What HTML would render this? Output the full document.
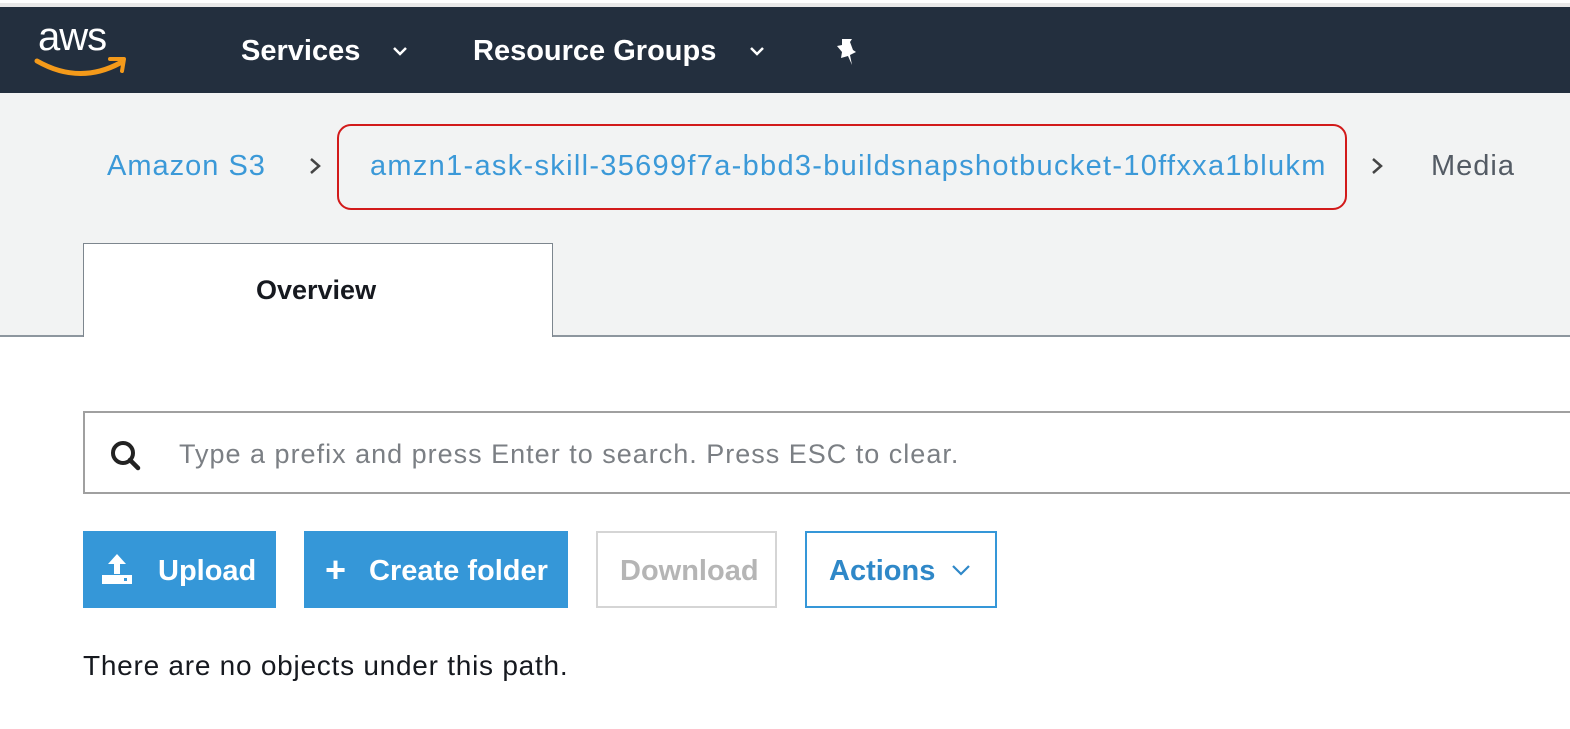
<!DOCTYPE html>
<html><head><meta charset="utf-8"><style>
*{margin:0;padding:0;box-sizing:border-box}
body{width:1570px;height:729px;overflow:hidden;background:#fff;font-family:"Liberation Sans",Arial,sans-serif;position:relative}
.a{position:absolute;white-space:nowrap}
</style></head><body>
<div class="a" style="left:0;top:0;width:1570px;height:7px;background:#e8e8e8;border-top:3px solid #fff"></div>
<div class="a" style="left:0;top:7px;width:1570px;height:86px;background:#232f3e"></div>
<div class="a" style="left:38px;top:15px;color:#fff;font-size:40px;letter-spacing:-1px">aws</div>
<svg class="a" style="left:34px;top:53px" width="94" height="26" viewBox="0 0 94 26"><path d="M3 8 Q45 32 86 10" stroke="#f49a1a" stroke-width="5" fill="none" stroke-linecap="round"/><path d="M76 6 L90 6 L88 18" stroke="#f49a1a" stroke-width="4" fill="none" stroke-linecap="round" stroke-linejoin="round"/></svg>
<div class="a" style="left:241px;top:35px;color:#fff;font-size:29px;font-weight:bold;letter-spacing:0px">Services</div>
<svg class="a" style="left:391px;top:45px" width="18" height="12"><path d="M3 3 L9 9 L15 3" stroke="#fff" stroke-width="2.5" fill="none"/></svg>
<div class="a" style="left:473px;top:35px;color:#fff;font-size:29px;font-weight:bold;letter-spacing:0px">Resource Groups</div>
<svg class="a" style="left:748px;top:45px" width="18" height="12"><path d="M3 3 L9 9 L15 3" stroke="#fff" stroke-width="2.5" fill="none"/></svg>
<svg class="a" style="left:832px;top:36px" width="30" height="32" viewBox="0 0 30 32"><path d="M10 3 L20 3 L18 6 L21 14 L24 16 L18 19 L20 29 L16 20 L9 22 L10 16 L5 10 L10 9 Z" fill="#fff"/></svg>
<div class="a" style="left:0;top:93px;width:1570px;height:243px;background:#f2f3f3"></div>
<div class="a" style="left:107px;top:150px;color:#3b99d8;font-size:29px;letter-spacing:1px">Amazon S3</div>
<svg class="a" style="left:307px;top:154px" width="16" height="24"><path d="M4 5 L12 12 L4 19" stroke="#444" stroke-width="2.5" fill="none"/></svg>
<div class="a" style="left:337px;top:124px;width:1010px;height:86px;border:2px solid #d21a1a;border-radius:14px"></div>
<div class="a" style="left:370px;top:150px;color:#3b99d8;font-size:29px;letter-spacing:1.3px">amzn1-ask-skill-35699f7a-bbd3-buildsnapshotbucket-10ffxxa1blukm</div>
<svg class="a" style="left:1369px;top:154px" width="16" height="24"><path d="M4 5 L12 12 L4 19" stroke="#444" stroke-width="2.5" fill="none"/></svg>
<div class="a" style="left:1431px;top:150px;color:#545b64;font-size:29px;letter-spacing:1px">Media</div>
<div class="a" style="left:0;top:335px;width:1570px;height:2px;background:#8d969e"></div>
<div class="a" style="left:83px;top:243px;width:470px;height:94px;background:#fff;border:1.5px solid #7d868e;border-bottom:none"></div>
<div class="a" style="left:256px;top:275px;color:#16191f;font-size:27px;font-weight:bold">Overview</div>
<div class="a" style="left:83px;top:411px;width:1500px;height:83px;border:2px solid #a0a0a0;background:#fff"></div>
<svg class="a" style="left:108px;top:438px" width="36" height="34"><circle cx="15" cy="15" r="10" stroke="#222" stroke-width="4" fill="none"/><path d="M22 22 L30 30" stroke="#222" stroke-width="4.5" stroke-linecap="round"/></svg>
<div class="a" style="left:179px;top:439px;color:#7b7f84;font-size:27px;letter-spacing:1px">Type a prefix and press Enter to search. Press ESC to clear.</div>
<div class="a" style="left:83px;top:531px;width:193px;height:77px;background:#3597d8"></div>
<svg class="a" style="left:98px;top:550px" width="38" height="38" viewBox="0 0 38 38"><path d="M19 4 L10 14 L16 14 L16 24 L22 24 L22 14 L28 14 Z" fill="#fff"/><rect x="4" y="25" width="30" height="9" fill="#fff"/><rect x="26" y="28" width="3" height="3" fill="#3597d8"/></svg>
<div class="a" style="left:158px;top:555px;color:#fff;font-size:29px;font-weight:bold">Upload</div>
<div class="a" style="left:304px;top:531px;width:264px;height:77px;background:#3597d8"></div>
<div class="a" style="left:325px;top:549px;color:#fff;font-size:36px;font-weight:bold">+</div>
<div class="a" style="left:369px;top:555px;color:#fff;font-size:29px;font-weight:bold">Create folder</div>
<div class="a" style="left:596px;top:531px;width:181px;height:77px;border:2px solid #d5d5d5;background:#fff"></div>
<div class="a" style="left:620px;top:555px;color:#b5b5b5;font-size:29px;font-weight:bold">Download</div>
<div class="a" style="left:805px;top:531px;width:192px;height:77px;border:2px solid #3597d8;background:#fff"></div>
<div class="a" style="left:829px;top:555px;color:#2f88c8;font-size:29px;font-weight:bold">Actions</div>
<svg class="a" style="left:950px;top:562px" width="22" height="16"><path d="M3 4 L11 12 L19 4" stroke="#2f88c8" stroke-width="2.2" fill="none"/></svg>
<div class="a" style="left:83px;top:650px;color:#16191f;font-size:28px;letter-spacing:0.75px">There are no objects under this path.</div>
</body></html>
